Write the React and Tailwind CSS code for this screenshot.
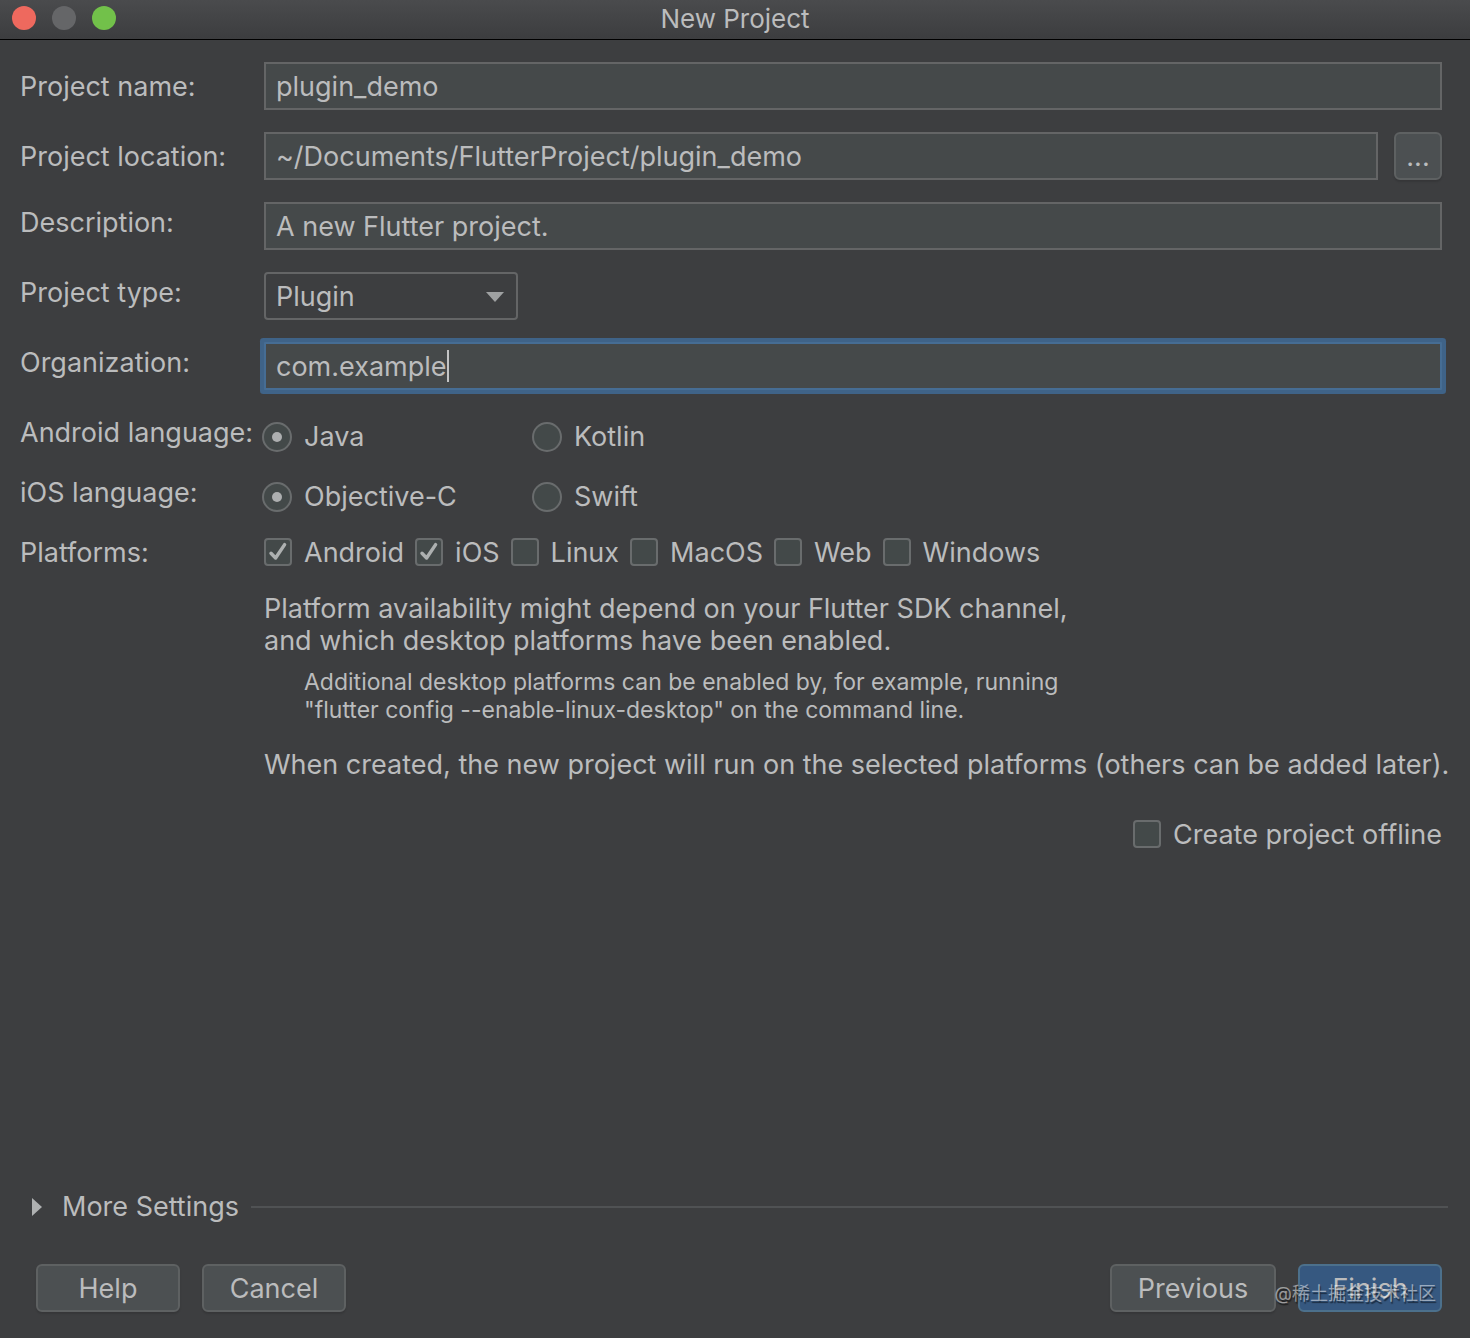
import React from "react";

const textField =
  "block h-12 w-full min-w-0 border-2 border-[#646566] bg-[#45494a] px-[10px] text-[#bbbcbd] outline-none";
const pushButton =
  "h-12 rounded-md border-2 border-[#5e6162] bg-[#4c5052] pt-0.5 text-[#bbbcbd] shadow-[0_2px_2px_rgba(0,0,0,0.12)]";

function Row({ label, htmlFor, labelClass, children }) {
  const cls = `flex shrink-0 items-center whitespace-nowrap w-61 ${labelClass}`;
  return (
    <div className="flex items-start">
      {htmlFor ? (
        <label htmlFor={htmlFor} className={cls}>{label}</label>
      ) : (
        <span className={cls}>{label}</span>
      )}
      <div className="min-w-0 flex-1">{children}</div>
    </div>
  );
}

function Radio({ name, label, checked }) {
  return (
    <label className="flex h-[30px] w-[270px] items-center gap-3 whitespace-nowrap">
      <span className="relative size-[30px] shrink-0">
        <input
          type="radio"
          name={name}
          defaultChecked={checked}
          className="peer block size-[30px] appearance-none rounded-full border-2 border-[#696c6d] bg-[#434949]"
        />
        <span className="pointer-events-none absolute inset-0 m-auto hidden size-[10px] rounded-full bg-[#adafb0] peer-checked:block" />
      </span>
      {label}
    </label>
  );
}

function Check({ label, checked }) {
  return (
    <label className="flex items-start gap-3 whitespace-nowrap">
      <span className="relative size-7 shrink-0">
        <input
          type="checkbox"
          defaultChecked={checked}
          className="peer block size-7 appearance-none rounded-[4px] border-2 border-[#696c6d] bg-[#434949]"
        />
        <svg
          viewBox="0 0 28 28"
          className="pointer-events-none absolute inset-0 hidden size-7 peer-checked:block"
          fill="none"
          stroke="#adb0b0"
          strokeWidth="3.4"
        >
          <path d="M7 15.2 L11.6 20 L20.6 6.6" strokeLinecap="round" strokeLinejoin="round" />
        </svg>
      </span>
      <span className="leading-[30px]">{label}</span>
    </label>
  );
}

export default function App() {
  return (
    <div className="relative flex min-h-screen flex-col bg-[#3d3e40] font-['Inter','Noto_Sans_CJK_SC',sans-serif] text-[27px] leading-8 text-[#bbbcbd]">
      <header className="flex h-10 items-center border-b border-black bg-linear-to-b from-[#4a4b4d] to-[#3c3d3f]">
        <div className="flex-1">
          <div className="flex gap-4 pb-1 pl-3">
            <button type="button" aria-label="Close" className="size-6 rounded-full bg-[#ee695e]" />
            <button type="button" aria-label="Minimize" className="size-6 rounded-full bg-[#656668]" />
            <button type="button" aria-label="Zoom" className="size-6 rounded-full bg-[#72c14a]" />
          </div>
        </div>
        <h1 className="pb-px text-[26px]">New Project</h1>
        <div className="flex-1" />
      </header>

      <main className="flex flex-1 flex-col pt-[22px] pr-7 pl-5">
        <div className="flex flex-col gap-[22px]">
          <Row label="Project name:" htmlFor="name" labelClass="h-12 pt-0.5">
            <input id="name" defaultValue="plugin_demo" className={textField} />
          </Row>
          <Row label="Project location:" htmlFor="location" labelClass="h-12 pt-0.5">
            <div className="flex gap-4">
              <input id="location" defaultValue="~/Documents/FlutterProject/plugin_demo" className={textField} />
              <button type="button" aria-label="Browse" className={`${pushButton} w-12 shrink-0`}>
                ...
              </button>
            </div>
          </Row>
          <Row label="Description:" htmlFor="description" labelClass="h-10 pt-0.5">
            <input id="description" defaultValue="A new Flutter project." className={textField} />
          </Row>
          <Row label="Project type:" htmlFor="type" labelClass="h-10 pt-0.5">
            <div className="relative w-[254px]">
              <select
                id="type"
                className="block h-12 w-full appearance-none rounded-[4px] border-2 border-[#646566] bg-[#3d3e40] px-[10px] pt-0.5 outline-none"
              >
                <option>Plugin</option>
              </select>
              <svg viewBox="0 0 18 10" className="pointer-events-none absolute top-5 right-[14px] h-[10px] w-[18px]" fill="#9fa1a2">
                <path d="M0 0H18L9 10Z" />
              </svg>
            </div>
          </Row>
          <Row label="Organization:" htmlFor="organization" labelClass="h-10 pt-0.5">
            <div className="flex h-12 items-center rounded-[1px] border-2 border-[#466d94] bg-[#45494a] pl-[10px] ring-4 ring-[#3f6388]">
              <input id="organization" defaultValue="com.example" className="field-sizing-content bg-transparent pt-0.5 outline-none" />
              <span className="h-8 w-0.5 bg-[#c3c4c5]" />
            </div>
          </Row>
        </div>

        <div className="flex flex-col gap-[30px] pt-8">
          <Row label="Android language:" labelClass="h-[22px]">
            <div role="radiogroup" aria-label="Android language" className="-ml-0.5 flex">
              <Radio name="android" label="Java" checked />
              <Radio name="android" label="Kotlin" />
            </div>
          </Row>
          <Row label="iOS language:" labelClass="h-[22px]">
            <div role="radiogroup" aria-label="iOS language" className="-ml-0.5 flex">
              <Radio name="ios" label="Objective-C" checked />
              <Radio name="ios" label="Swift" />
            </div>
          </Row>
        </div>

        <div className="pt-[26px]">
          <Row label="Platforms:" labelClass="h-[30px]">
            <div role="group" aria-label="Platforms" className="flex gap-[11px]">
              <Check label="Android" checked />
              <Check label="iOS" checked />
              <Check label="Linux" />
              <Check label="MacOS" />
              <Check label="Web" />
              <Check label="Windows" />
            </div>
            <p className="pt-[25px] whitespace-nowrap">
              Platform availability might depend on your Flutter SDK channel,
              <br />
              and which desktop platforms have been enabled.
            </p>
            <p className="pt-[11px] pl-10 text-[23px] leading-7 whitespace-nowrap">
              Additional desktop platforms can be enabled by, for example, running
              <br />
              "flutter config --enable-linux-desktop" on the command line.
            </p>
            <p className="pt-[25px] whitespace-nowrap">
              When created, the new project will run on the selected platforms (others can be added later).
            </p>
          </Row>
        </div>

        <div className="flex justify-end pt-[39px]">
          <Check label="Create project offline" />
        </div>
      </main>

      <div className="flex items-center gap-3 pr-[22px] pl-8">
        <button type="button" className="flex items-center gap-5 whitespace-nowrap">
          <svg viewBox="0 0 10 18" className="h-[18px] w-[10px]" fill="#afb1b2">
            <path d="M0 0L10 9L0 18Z" />
          </svg>
          More Settings
        </button>
        <div className="h-0.5 flex-1 bg-[#505254]" />
      </div>

      <footer className="flex gap-[22px] pt-[41px] pr-7 pb-[26px] pl-9">
        <button type="button" className={`${pushButton} w-36`}>Help</button>
        <button type="button" className={`${pushButton} w-36`}>Cancel</button>
        <div className="flex-1" />
        <button type="button" className={`${pushButton} w-[166px]`}>Previous</button>
        <button type="button" className="h-12 w-36 rounded-md border-2 border-[#4c708c] bg-[#365880] pt-0.5 text-[#bbbcbd]">
          Finish
        </button>
      </footer>

      <div className="pointer-events-none absolute right-[34px] bottom-[30px] text-[18px] leading-7 whitespace-nowrap text-white/50 [text-shadow:1px_2px_1px_rgba(0,0,0,0.5)]">
        @稀土掘金技术社区
      </div>
    </div>
  );
}
